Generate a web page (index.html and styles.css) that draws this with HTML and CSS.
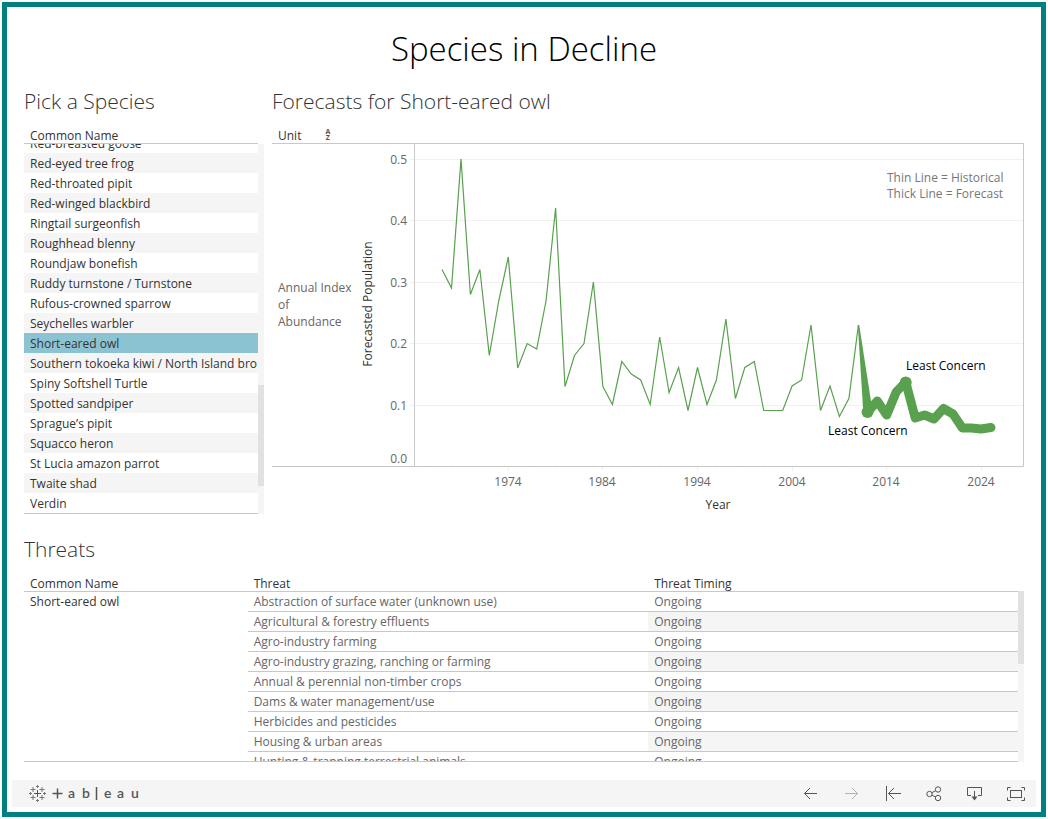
FILE: index.html
```html
<!DOCTYPE html>
<html lang="en">
<head>
<meta charset="utf-8">
<title>Species in Decline</title>
<link rel="stylesheet" href="styles.css">
</head>
<body>
<div class="frame">
  <h1 class="title">Species in Decline</h1>
  <main class="dashboard">
    <div class="top">
      <section class="panel">
        <h2 class="panel-title">Pick a Species</h2>
        <div class="column-head column-head-list">Common Name</div>
        <div class="list-area">
          <ul class="species">
            <li><button type="button">Red-breasted goose</button></li>
            <li><button type="button">Red-eyed tree frog</button></li>
            <li><button type="button">Red-throated pipit</button></li>
            <li><button type="button">Red-winged blackbird</button></li>
            <li><button type="button">Ringtail surgeonfish</button></li>
            <li><button type="button">Roughhead blenny</button></li>
            <li><button type="button">Roundjaw bonefish</button></li>
            <li><button type="button">Ruddy turnstone / Turnstone</button></li>
            <li><button type="button">Rufous-crowned sparrow</button></li>
            <li><button type="button">Seychelles warbler</button></li>
            <li><button type="button" class="selected" aria-pressed="true">Short-eared owl</button></li>
            <li><button type="button">Southern tokoeka kiwi / North Island bro</button></li>
            <li><button type="button">Spiny Softshell Turtle</button></li>
            <li><button type="button">Spotted sandpiper</button></li>
            <li><button type="button">Sprague’s pipit</button></li>
            <li><button type="button">Squacco heron</button></li>
            <li><button type="button">St Lucia amazon parrot</button></li>
            <li><button type="button">Twaite shad</button></li>
            <li><button type="button">Verdin</button></li>
          </ul>
          <div class="track track-list"><div class="thumb thumb-list"></div></div>
        </div>
      </section>
      <section class="panel">
        <h2 class="panel-title">Forecasts for Short-eared owl</h2>
        <div class="column-head">Unit
          <button type="button" class="sort" aria-label="Sort"><span>A</span><span>Z</span></button>
        </div>
        <svg class="chart" viewBox="272 144 752 370" role="img" aria-label="Forecasted population by year">
          <g class="grid">
            <path d="M410 159.5H1023M410 220.5H1023M410 282.5H1023M410 343.5H1023M410 405.5H1023"/>
            <path d="M508.5 467v4M602.5 467v4M697.5 467v4M792.5 467v4M886.5 467v4M981.5 467v4"/>
            <path stroke-dasharray="1 8.46" d="M422.8 467.5H1023"/>
          </g>
          <path class="axis" d="M272 466.5H1023.5V144M414.5 144V466"/>
          <g class="label">
            <text x="278" y="292">Annual Index</text>
            <text x="278" y="309">of</text>
            <text x="278" y="326">Abundance</text>
          </g>
          <g class="label end">
            <text x="407" y="164">0.5</text>
            <text x="407" y="225">0.4</text>
            <text x="407" y="287">0.3</text>
            <text x="407" y="348">0.2</text>
            <text x="407" y="410">0.1</text>
            <text x="407" y="463">0.0</text>
          </g>
          <g class="label mid">
            <text x="508" y="486">1974</text>
            <text x="602" y="486">1984</text>
            <text x="697" y="486">1994</text>
            <text x="792" y="486">2004</text>
            <text x="886" y="486">2014</text>
            <text x="981" y="486">2024</text>
          </g>
          <text class="axis-title mid" x="718" y="509">Year</text>
          <text class="axis-title mid" transform="translate(372 304) rotate(-90)">Forecasted Population</text>
          <g class="note">
            <text x="887" y="182">Thin Line = Historical</text>
            <text x="887" y="198">Thick Line = Forecast</text>
          </g>
          <polyline class="history" points="442,269.5 451.5,288 461,159 470.4,294.5 479.9,269.5 489.3,355.5 498.8,300.5 508.3,257 517.7,368 527.2,343.5 536.7,349 546.1,300.5 555.6,208 565,386.5 574.5,355.5 584,343.5 593.4,282 602.9,386.5 612.4,404.5 621.8,361.5 631.3,374 640.7,380 650.2,404.5 659.7,337 669.1,392.5 678.6,367.5 688,410.5 697.5,367.5 707,404.5 716.4,380 725.9,319 735.4,398.5 744.8,367.5 754.3,361.5 763.7,410.5 773.2,410.5 782.7,410.5 792.1,386 801.6,380 811,325 820.5,410.5 830,386 839.4,416.5 848.9,398.5 858.4,325"/>
          <path class="mark" d="M857.8 325L859.2 325L872.5 411L863.3 413Z"/>
          <polyline class="forecast" points="867.8,412 877.3,401 886.7,415 896.2,392 905.7,382 915.2,418 924.6,415 934,419 943.5,408.5 953,414 962.4,428 971.5,428 981,429 991,427.5"/>
          <circle class="mark" cx="867.5" cy="412" r="6"/>
          <circle class="mark" cx="905.7" cy="382.5" r="6"/>
          <g class="mark-label">
            <text x="906" y="370">Least Concern</text>
            <text x="828" y="435">Least Concern</text>
          </g>
        </svg>
      </section>
    </div>
    <section class="panel threats">
      <h2 class="panel-title">Threats</h2>
      <div class="threat-area">
        <div class="table-view">
          <table>
            <colgroup><col class="col-name"><col class="col-threat"><col></colgroup>
            <thead><tr><th scope="col">Common Name</th><th scope="col">Threat</th><th scope="col">Threat Timing</th></tr></thead>
            <tbody>
              <tr><th scope="row" rowspan="9">Short-eared owl</th><td>Abstraction of surface water (unknown use)</td><td class="timing">Ongoing</td></tr>
              <tr><td>Agricultural &amp; forestry effluents</td><td class="timing">Ongoing</td></tr>
              <tr><td>Agro-industry farming</td><td class="timing">Ongoing</td></tr>
              <tr><td>Agro-industry grazing, ranching or farming</td><td class="timing">Ongoing</td></tr>
              <tr><td>Annual &amp; perennial non-timber crops</td><td class="timing">Ongoing</td></tr>
              <tr><td>Dams &amp; water management/use</td><td class="timing">Ongoing</td></tr>
              <tr><td>Herbicides and pesticides</td><td class="timing">Ongoing</td></tr>
              <tr><td>Housing &amp; urban areas</td><td class="timing">Ongoing</td></tr>
              <tr><td>Hunting &amp; trapping terrestrial animals</td><td class="timing">Ongoing</td></tr>
            </tbody>
          </table>
        </div>
        <div class="track track-table"><div class="thumb thumb-table"></div></div>
      </div>
    </section>
  </main>
  <footer class="toolbar">
    <a class="logo" href="#" aria-label="Tableau">
      <svg width="112" height="21" viewBox="0 0 112 21">
        <g class="logo-mark">
          <path class="logo-core" d="M9.5 7v7M6 10.5h7"/>
          <path d="M5 4v5M2.5 6.5h5M14 4v5M11.5 6.5h5M5 12v5M2.5 14.5h5M14 12v5M11.5 14.5h5"/>
          <path d="M9.5 2v3M8 3.5h3M9.5 16v3M8 17.5h3M2.5 9v3M1 10.5h3M16.5 9v3M15 10.5h3"/>
        </g>
        <path class="logo-bar" d="M29.5 5.5v10M24.500 10.500h10M68.500 4v13"/>
        <text class="logo-text" x="40 54" y="15">ab</text>
        <text class="logo-text" x="76 89 103" y="15">eau</text>
      </svg>
    </a>
    <button type="button" class="tool" aria-label="Undo"><svg viewBox="0 0 21 21"><path d="M17 10.5H4.5M10 5L4.5 10.5L10 16"/></svg></button>
    <button type="button" class="tool" aria-label="Redo" disabled><svg viewBox="0 0 21 21"><path d="M4 10.5H16.5M11 5L16.5 10.5L11 16"/></svg></button>
    <button type="button" class="tool" aria-label="Revert"><svg viewBox="0 0 21 21"><path d="M4.5 3V18M19 10.5H6.5M12 5L6.5 10.5L12 16"/></svg></button>
    <button type="button" class="tool" aria-label="Share"><svg viewBox="0 0 21 21"><circle cx="6.5" cy="11" r="2.7"/><circle cx="15" cy="6.5" r="2.7"/><circle cx="15" cy="15" r="2.7"/><path d="M8.8 9.7L12.600 7.800M8.800 12.300L12.600 13.800"/></svg></button>
    <button type="button" class="tool" aria-label="Download"><svg viewBox="0 0 21 21"><path d="M7 12.5H3.5V4.5H17.5V12.5H14M10.5 8V14"/><path class="solid" d="M7.5 13.5H13.5L10.5 17.5Z"/></svg></button>
    <button type="button" class="tool" aria-label="Full Screen"><svg viewBox="0 0 21 21"><rect x="5.5" y="7.5" width="11" height="7"/><path d="M5.5 4.5H2.5V7.5M16.5 4.5H19.5V7.5M5.5 17.5H2.5V14.5M16.5 17.5H19.5V14.5"/></svg></button>
  </footer>
</div>
</body>
</html>
```
FILE: styles.css
```css
* { box-sizing: border-box; }

body {
  margin: 0;
  padding: 2px;
  background: #fff;
  color: #333;
  font: 400 12px/16px "Open Sans", "Noto Sans", sans-serif;
}

button {
  margin: 0;
  padding: 0;
  border: 0;
  background: none;
  color: inherit;
  font: inherit;
  cursor: pointer;
}

.frame {
  display: flex;
  flex-direction: column;
  height: calc(100vh - 4px);
  min-height: 760px;
  padding: 0 5px 5px;
  border: 5px solid #008080;
}

.title {
  margin: 20px 0 16px;
  color: #000;
  font-size: 33px;
  line-height: 44px;
  font-weight: 300;
  text-align: center;
}

.dashboard {
  display: flex;
  flex: 1;
  flex-direction: column;
  gap: 21px;
  min-height: 0;
  padding: 0 12px 18px;
}

.top {
  display: grid;
  grid-template-columns: 240fr 752fr;
  gap: 8px;
}

.panel {
  display: flex;
  flex-direction: column;
  min-width: 0;
  min-height: 0;
}

.threats { flex: 1; }

.panel-title {
  margin: 0;
  font-size: 21px;
  line-height: 28px;
  font-weight: 300;
}

.column-head {
  display: flex;
  align-items: flex-end;
  gap: 24px;
  height: 29px;
  padding-left: 6px;
  border-bottom: 1px solid #c8c8c8;
  line-height: 14px;
}

.column-head-list { margin-right: 6px; }

.sort {
  display: grid;
  padding-bottom: 2px;
  color: #555;
  font-size: 7px;
  line-height: 6px;
  font-weight: 700;
}

.list-area {
  display: flex;
  flex: 1 1 0;
  min-height: 0;
}

.species {
  display: flex;
  flex: 1;
  flex-direction: column;
  justify-content: flex-end;
  min-width: 0;
  margin: 0;
  padding: 0;
  overflow: hidden;
  border-bottom: 1px solid #c8c8c8;
  list-style: none;
}

.species li { flex: none; }
.species li:nth-child(even) { background: #f5f5f5; }

.species button {
  display: block;
  width: 100%;
  height: 20px;
  padding: 2px 0 0 6px;
  overflow: hidden;
  text-align: left;
  white-space: nowrap;
}

.species .selected { background: #8cc3d3; }

.track {
  display: flex;
  flex: none;
  flex-direction: column;
  width: 6px;
  background: #f5f5f5;
}

.thumb { background: #e1e1e1; }
.track-list { padding-top: 241px; }
.thumb-list { height: 101px; }
.track-table { margin-top: 28px; }
.thumb-table { height: 73px; }

.chart {
  display: block;
  width: 100%;
  font-size: 12px;
}

.grid { fill: none; stroke: #f0f0f0; }
.axis { fill: none; stroke: #c8c8c8; }
.label { fill: #666; }
.end { text-anchor: end; }
.mid { text-anchor: middle; }
.axis-title { fill: #333; }
.note { fill: #777; }
.mark-label { fill: #000; }
.history { fill: none; stroke: #59a14f; stroke-width: 1.2; }
.forecast {
  fill: none;
  stroke: #59a14f;
  stroke-width: 9;
  stroke-linecap: round;
  stroke-linejoin: round;
}
.mark { fill: #59a14f; }

.threat-area {
  display: flex;
  flex: 1 1 0;
  min-height: 0;
}

.table-view {
  flex: 1;
  overflow: hidden;
  border-bottom: 1px solid #c8c8c8;
}

table {
  width: 100%;
  border-spacing: 0;
  table-layout: fixed;
}

.col-name { width: 22.5%; }
.col-threat { width: 40.3%; }

th, td {
  height: 20px;
  padding: 2px 6px 1px;
  border-bottom: 1px solid #c8c8c8;
  font-weight: 400;
  text-align: left;
  white-space: nowrap;
}

thead th {
  height: 29px;
  padding: 14px 6px 0;
  line-height: 14px;
}

tbody th {
  border: 0;
  vertical-align: top;
}

td { color: #666; }
tr:nth-child(even) .timing { background: #f5f5f5; }

.toolbar {
  display: flex;
  align-items: center;
  height: 27px;
  padding-left: 16px;
  background: #f5f5f5;
  color: #555;
}

.logo {
  display: flex;
  margin-right: auto;
}

.logo-mark, .logo-bar { fill: none; stroke: #777; }
.logo-mark .logo-core { stroke: #555; }
.logo-bar { stroke: #555; stroke-width: 1.500; }
.logo-text { fill: #555; font: 600 14px Lato, sans-serif; }

.tool {
  display: grid;
  place-items: center;
  width: 41px;
  height: 27px;
}

.tool svg {
  width: 21px;
  height: 21px;
  fill: none;
  stroke: #555;
}

.tool:disabled svg { stroke: #b4b4b4; }
.tool .solid { fill: #555; stroke: none; }
```
